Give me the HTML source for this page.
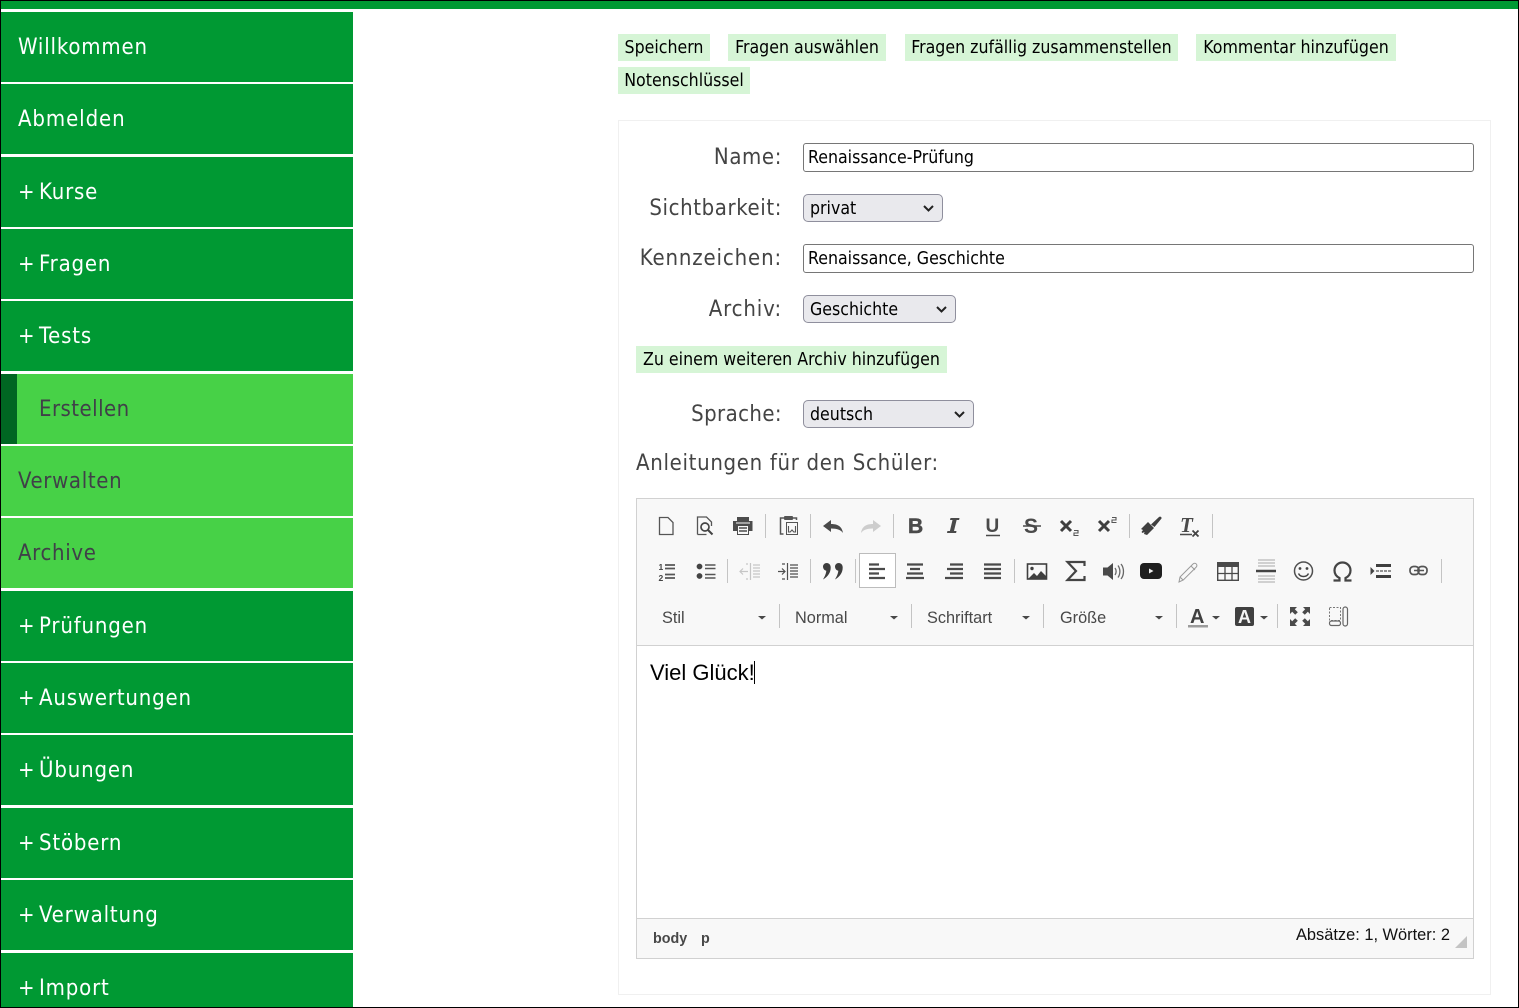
<!DOCTYPE html>
<html lang="de">
<head>
<meta charset="utf-8">
<title>Test erstellen</title>
<style>
html,body{margin:0;padding:0;background:#fff;}
html{width:1519px;height:1008px;overflow:hidden;}
body{width:1519px;height:1008px;position:relative;overflow:hidden;font-family:"DejaVu Sans Condensed","DejaVu Sans",sans-serif;}
#frame{position:absolute;left:0;top:0;width:1517px;height:1006px;border:1px solid #000;z-index:50;pointer-events:none;}
#top{position:absolute;left:1px;top:1px;width:1517px;height:8px;background:#093;}
.m{position:absolute;left:1px;width:352px;height:70px;background:#093;color:#fff;font:22px/72px "DejaVu Sans Condensed","DejaVu Sans",sans-serif;letter-spacing:.82px;word-spacing:-3.5px;padding-left:17px;box-sizing:border-box;text-decoration:none;display:block;overflow:hidden;}
.m.l{background:#47d147;color:#404048;letter-spacing:.65px;}
.m.a{padding-left:38px;letter-spacing:.45px;}
.m.a i{position:absolute;left:0;top:0;width:16px;height:100%;background:#062;}
.b{position:absolute;height:27px;background:#d6f5d6;color:#000;font:17.6px/28px "DejaVu Sans Condensed","DejaVu Sans",sans-serif;text-align:center;white-space:nowrap;}
#panel{position:absolute;left:618px;top:120px;width:873px;height:875px;border:1px solid #f0f0f0;box-sizing:border-box;}
.lb{position:absolute;right:737px;color:#444;font:22px/30px "DejaVu Sans Condensed","DejaVu Sans",sans-serif;letter-spacing:.68px;white-space:nowrap;}
input{position:absolute;left:803px;width:671px;height:29px;box-sizing:border-box;border:1px solid #767676;border-radius:3px;padding:1px 4px 0;font:17.6px "DejaVu Sans Condensed","DejaVu Sans",sans-serif;color:#000;background:#fff;outline:0;}
select{position:absolute;left:803px;height:28px;box-sizing:border-box;border:1px solid #8f8f9d;border-radius:5px;padding:1px 0 0 6px;font:17.6px "DejaVu Sans Condensed","DejaVu Sans",sans-serif;color:#000;background:#e9e9ed;appearance:none;-webkit-appearance:none;outline:0;}
#ed{position:absolute;left:636px;top:498px;width:838px;height:461px;box-sizing:border-box;border:1px solid #d1d1d1;background:#f8f8f8;}
#edc{position:absolute;left:636px;top:645px;width:838px;height:274px;box-sizing:border-box;border:1px solid #d1d1d1;background:#fff;}
#txt{position:absolute;left:650px;top:659px;font:22px/28px "Liberation Sans",Arial,sans-serif;color:#000;white-space:nowrap;}
#caret{position:absolute;left:754px;top:661px;width:1px;height:23px;background:#000;}
.t{position:absolute;font:16.3px/20px "Liberation Sans",Arial,sans-serif;color:#484848;white-space:nowrap;}
#icons{position:absolute;left:0;top:0;width:1519px;height:1008px;pointer-events:none;}
</style>
</head>
<body>
<div id="top"></div>

<a class="m" style="top:12px">Willkommen</a>
<a class="m" style="top:84px;letter-spacing:.9px">Abmelden</a>
<a class="m" style="top:157px">+ Kurse</a>
<a class="m" style="top:229px">+ Fragen</a>
<a class="m" style="top:301px">+ Tests</a>
<a class="m l a" style="top:374px"><i></i>Erstellen</a>
<a class="m l" style="top:446px">Verwalten</a>
<a class="m l" style="top:518px">Archive</a>
<a class="m" style="top:591px">+ Prüfungen</a>
<a class="m" style="top:663px">+ Auswertungen</a>
<a class="m" style="top:735px">+ Übungen</a>
<a class="m" style="top:808px">+ Stöbern</a>
<a class="m" style="top:880px">+ Verwaltung</a>
<a class="m" style="top:953px;height:54px">+ Import</a>

<div class="b" style="left:618px;top:34px;width:92px">Speichern</div>
<div class="b" style="left:728px;top:34px;width:158px">Fragen auswählen</div>
<div class="b" style="left:905px;top:34px;width:273px">Fragen zufällig zusammenstellen</div>
<div class="b" style="left:1196px;top:34px;width:200px">Kommentar hinzufügen</div>
<div class="b" style="left:618px;top:67px;width:132px">Notenschlüssel</div>

<div id="panel"></div>

<div class="lb" style="top:143px;letter-spacing:.6px">Name:</div>
<input style="top:143px" value="Renaissance-Prüfung">
<div class="lb" style="top:194px;letter-spacing:.6px">Sichtbarkeit:</div>
<select style="top:194px;width:140px"><option>privat</option></select>
<div class="lb" style="top:244px;letter-spacing:.85px">Kennzeichen:</div>
<input style="top:244px" value="Renaissance, Geschichte">
<div class="lb" style="top:295px;letter-spacing:.85px">Archiv:</div>
<select style="top:295px;width:153px"><option>Geschichte</option></select>
<div class="b" style="left:636px;top:346px;width:311px">Zu einem weiteren Archiv hinzufügen</div>
<div class="lb" style="top:400px;letter-spacing:.4px">Sprache:</div>
<select style="top:400px;width:171px"><option>deutsch</option></select>
<div class="lb" style="top:449px;right:auto;left:636px">Anleitungen für den Schüler:</div>

<div id="ed"></div>
<div id="edc"></div>
<div style="position:absolute;left:859px;top:553px;width:37px;height:35px;box-sizing:border-box;border:1px solid #bcbcbc;background:#fff"></div>
<div id="txt">Viel Glück!</div><div id="caret"></div>

<div class="t" style="left:662px;top:608px">Stil</div>
<div class="t" style="left:795px;top:608px">Normal</div>
<div class="t" style="left:927px;top:608px">Schriftart</div>
<div class="t" style="left:1060px;top:608px">Größe</div>

<div class="t" style="left:653px;top:929px;font-size:14.3px;font-weight:bold">body</div>
<div class="t" style="left:701px;top:929px;font-size:14.3px;font-weight:bold">p</div>
<div class="t" style="left:1296px;top:925px;color:#111;font-size:16.4px">Absätze: 1, Wörter: 2</div>

<svg id="icons" viewBox="0 0 1519 1008" xmlns="http://www.w3.org/2000/svg">
<!-- select chevrons -->
<g fill="none" stroke="#222" stroke-width="2">
<path d="M924 206l4.500 4.500 4.500-4.500"/>
<path d="M937 307l4.500 4.500 4.500-4.500"/>
<path d="M955 412l4.500 4.500 4.500-4.500"/>
</g>
<!-- separators -->
<g stroke="#c4c4c4" stroke-width="1">
<path d="M765.500 514v24M810.500 514v24M893.500 514v24M1129.500 514v24M1212.500 514v24"/>
<path d="M727.500 559v24M810.500 559v24M855.500 559v24M1014.500 559v24M1441.500 559v24"/>
<path d="M779.500 604v24M911.500 604v24M1043.500 604v24M1176.500 604v24M1277.500 604v24"/>
</g>
<!-- row 1 -->
<path d="M659.500 517.500h8.500l5 5v12h-13.500z" fill="none" stroke="#555" stroke-width="1.300"/>
<path d="M697.500 534.500v-17.500h9l5 5v4M697.500 534.500h9" fill="none" stroke="#555" stroke-width="1.300"/>
<circle cx="705" cy="527" r="4" fill="none" stroke="#444" stroke-width="1.700"/>
<path d="M708 530l4.500 4.500" stroke="#444" stroke-width="2"/>
<path d="M737 517h12v4h3.500v10h-3.500v4h-12v-4h-4v-10h4z" fill="#4c4c4c"/>
<path d="M736 523h14" stroke="#f8f8f8" stroke-width="1"/>
<path d="M738 526h10v8h-10z" fill="#f8f8f8"/><path d="M739 528h8M739 531h8" stroke="#4c4c4c" stroke-width="1.500"/>
<path d="M784 518h-3.500v16h3M793 518h3.500v2" fill="none" stroke="#555" stroke-width="1.500"/>
<rect x="784" y="516" width="9" height="4" rx="1" fill="#555"/>
<rect x="786.500" y="522.500" width="11" height="12" fill="#f8f8f8" stroke="#555"/>
<path d="M788.500 526v6h1.700l1.800-2 1.800 2h1.700v-6" fill="none" stroke="#555" stroke-width="1.100"/>
<path d="M823 526l8-6v4c6 0 11 2 12 9-2-3-6-4.500-12-4.500v3.500z" fill="#4a4a4a"/>
<path d="M881 526l-8-6v4c-6 0-11 2-12 9 2-3 6-4.500 12-4.500v3.500z" fill="#cdcdcd"/>
<text x="908" y="533" font-family="'Liberation Sans',sans-serif" font-weight="bold" font-size="21" fill="#4a4a4a" stroke="#4a4a4a" stroke-width=".5">B</text>
<path d="M950.500 518h9l-.4 2h-2.500l-2.600 11h2.500l-.4 2h-9.100l.4-2h2.500l2.600-11h-2.500z" fill="#4a4a4a"/>
<text x="985.500" y="532" font-family="'Liberation Sans',sans-serif" font-weight="bold" font-size="19" fill="#4a4a4a">U</text>
<path d="M986 535.500h14" stroke="#4a4a4a" stroke-width="1.500"/>
<text x="1024" y="533" font-family="'Liberation Sans',sans-serif" font-weight="bold" font-size="21" fill="#4a4a4a">S</text>
<path d="M1023 526h18" stroke="#4a4a4a" stroke-width="1.500"/>
<path d="M1061 521l10 10M1071 521l-10 10" stroke="#3f3f3f" stroke-width="3"/>
<path d="M1074 530.500h4v2.500h-4v2.500h4.500" fill="none" stroke="#555" stroke-width="1.100"/>
<path d="M1099 521l10 10M1109 521l-10 10" stroke="#3f3f3f" stroke-width="3"/>
<path d="M1112 517.500h4v2.500h-4v2.500h4.500" fill="none" stroke="#555" stroke-width="1.100"/>
<path d="M1141 529l7-7 6 6-7 7-3-1 .5-2-2 1-1-1 1.500-2z" fill="#3f3f3f"/>
<path d="M1151 524.500l8-7.500c1-1 3 0 2.500 1.500l-7 8.500z" fill="#3f3f3f"/>
<text x="1180" y="532" font-family="'Liberation Serif',serif" font-weight="bold" font-style="italic" font-size="21" fill="#4a4a4a">T</text>
<path d="M1180 534.500h12" stroke="#4a4a4a" stroke-width="1.500"/>
<path d="M1192.500 530.500l6 6M1198.500 530.500l-6 6" stroke="#444" stroke-width="1.800"/>
<!-- row 2 -->
<text x="658.500" y="570" font-family="'Liberation Sans',sans-serif" font-size="8.500" font-weight="bold" fill="#444">1</text>
<text x="658.500" y="581" font-family="'Liberation Sans',sans-serif" font-size="8.500" font-weight="bold" fill="#444">2</text>
<path d="M665 565h10M665 568.500h10M665 574.500h10M665 578h10" stroke="#555" stroke-width="1.700"/>
<circle cx="699.500" cy="566.500" r="2.900" fill="#444"/><circle cx="699.500" cy="576" r="2.900" fill="#444"/>
<path d="M705 565h10.500M705 568.500h10.500M705 574.500h10.500M705 578h10.500" stroke="#555" stroke-width="1.500"/>
<g stroke="#c6c6c6" stroke-width="1.200" fill="none">
<path d="M750.500 563v17M753 565h7M753 568h7M753 571h7M753 574h7M753 577h7M740 571.500h8"/>
<path d="M743 568.500l-3 3 3 3M746 564h2M746 579h2"/>
</g>
<g stroke="#4f4f4f" stroke-width="1.200" fill="none">
<path d="M787.500 563v17M790 565h8M790 568h8M790 571h8M790 574h8M790 577h8M778 571.500h7"/>
<path d="M782 568.500l3 3-3 3M782 564h3M782 579h3"/>
</g>
<path d="M823 566.500c0-1.800 1.600-3.500 3.800-3.500 2.200 0 3.900 1.800 3.900 4.500 0 5-2.700 9-7.700 12 1-2 3-5 3.300-8.800-1.800-.2-3.300-2-3.300-4.200z" fill="#3d3d3d"/>
<path d="M835 566.500c0-1.800 1.600-3.500 3.800-3.500 2.200 0 3.900 1.800 3.900 4.500 0 5-2.700 9-7.700 12 1-2 3-5 3.300-8.800-1.800-.2-3.300-2-3.300-4.200z" fill="#3d3d3d"/>
<g stroke="#4a4a4a" stroke-width="2.300">
<path d="M869 564.500h10M869 569h16M869 573.500h10M869 578h16"/>
<path d="M907 564.500h16M910 569h10M907 573.500h16M906 578h18"/>
<path d="M950 564.500h13M947 569h16M950 573.500h13M945 578h18"/>
<path d="M984 564.500h17M984 569h17M984 573.500h17M984 578h17"/>
</g>
<rect x="1027.500" y="564" width="19" height="15" fill="#f8f8f8" stroke="#3f3f3f" stroke-width="1.600"/>
<circle cx="1032" cy="568.500" r="1.700" fill="#3f3f3f"/>
<path d="M1028 579l6-6 3 3 4-5 5 5v3z" fill="#3f3f3f"/>
<path d="M1084.500 566v-4h-17l8.500 9-8.500 9h17v-4" fill="none" stroke="#444" stroke-width="2.200"/>
<path d="M1103 567.500h4.500l5.500-4.500v17l-5.500-4.500h-4.500z" fill="#4a4a4a"/>
<path d="M1115 568c1.500 2 1.500 5 0 7M1118 565.500c2.500 3.500 2.500 8.500 0 12M1121 564c3.300 4 3.300 11 0 15" fill="none" stroke="#666" stroke-width="1.300"/>
<rect x="1140" y="563" width="22" height="16" rx="4" fill="#1f1f1f"/>
<path d="M1149 568.500v5l4.500-2.500z" fill="#eee"/>
<path d="M1179 582l1-5 13-13c1-1 2.500-1 3.300 0 .8 1 .8 2 0 3l-13 13z M1191 566l4 4 M1180 577l3 3" fill="none" stroke="#9a9a9a" stroke-width="1"/>
<rect x="1217" y="562" width="22" height="5" fill="#4a4a4a"/>
<rect x="1217.700" y="562.700" width="20.600" height="17.600" fill="none" stroke="#4a4a4a" stroke-width="1.400"/>
<path d="M1225 567v13M1232 567v13M1218 573.500h20" stroke="#4a4a4a" stroke-width="1.300"/>
<path d="M1258 560h17M1258 563h17M1258 566h17M1258 576h17M1258 579h17M1258 582h17" stroke="#a8a8a8" stroke-width="1.100"/>
<path d="M1256 571h20" stroke="#444" stroke-width="2.400"/>
<circle cx="1303.500" cy="571" r="9" fill="none" stroke="#4f4f4f" stroke-width="1.500"/>
<circle cx="1300" cy="568.500" r="1.400" fill="#444"/><circle cx="1307" cy="568.500" r="1.400" fill="#444"/>
<path d="M1298.500 573.500c2 4 8 4 10 0" fill="none" stroke="#444" stroke-width="1.400"/>
<path d="M1333.500 580.500h6v-2.500c-3-1.500-5-4-5-7.500 0-4.500 3.500-8 8-8s8 3.500 8 8c0 3.500-2 6-5 7.500v2.500h6" fill="none" stroke="#444" stroke-width="2.200"/>
<path d="M1370.500 567v8l4-4z" fill="#444"/>
<path d="M1376 565.500h15M1376 576.500h15" stroke="#3f3f3f" stroke-width="3"/>
<path d="M1376 571h15" stroke="#555" stroke-width="1.300" stroke-dasharray="3 1"/>
<rect x="1410" y="566.500" width="9" height="8" rx="3.500" fill="none" stroke="#555" stroke-width="1.700"/>
<rect x="1418" y="566.500" width="9" height="8" rx="3.500" fill="none" stroke="#555" stroke-width="1.700"/>
<path d="M1414 570.500h10" stroke="#555" stroke-width="1.500"/>
<!-- row 3 -->
<g fill="#484848">
<path d="M758 616h8l-4 3.500z"/><path d="M890 616h8l-4 3.500z"/><path d="M1022 616h8l-4 3.500z"/><path d="M1155 616h8l-4 3.500z"/>
<path d="M1212 616h8l-4 3.500z"/><path d="M1260 616h8l-4 3.500z"/>
</g>
<text x="1190" y="623" font-family="'Liberation Sans',sans-serif" font-weight="bold" font-size="20" fill="#404040">A</text>
<rect x="1188" y="625" width="20" height="2.500" fill="#9c9c9c"/>
<rect x="1235" y="607" width="19" height="19" rx="2" fill="#404040"/>
<text x="1238" y="623" font-family="'Liberation Sans',sans-serif" font-weight="bold" font-size="18" fill="#f4f4f4">A</text>
<g fill="#4a4a4a">
<path d="M1290 607h7l-2.200 2.200 3 3-2.600 2.600-3-3-2.200 2.200z"/>
<path d="M1310 607h-7l2.200 2.200-3 3 2.600 2.600 3-3 2.200 2.200z"/>
<path d="M1290 626h7l-2.200-2.200 3-3-2.600-2.600-3 3-2.200-2.200z"/>
<path d="M1310 626h-7l2.200-2.200-3-3 2.600-2.600 3 3 2.200-2.200z"/>
</g>
<rect x="1329.500" y="607.500" width="11" height="13" fill="none" stroke="#777" stroke-dasharray="2 1.500"/>
<rect x="1329.500" y="621" width="11" height="4.500" rx="2" fill="none" stroke="#666" stroke-width="1.200"/>
<rect x="1343" y="607" width="4.500" height="19" rx="2.200" fill="none" stroke="#666" stroke-width="1.200"/>
<!-- resizer -->
<path d="M1467 936v12h-12z" fill="#c4c4c4"/>
</svg>
<div id="frame"></div>
</body>
</html>
